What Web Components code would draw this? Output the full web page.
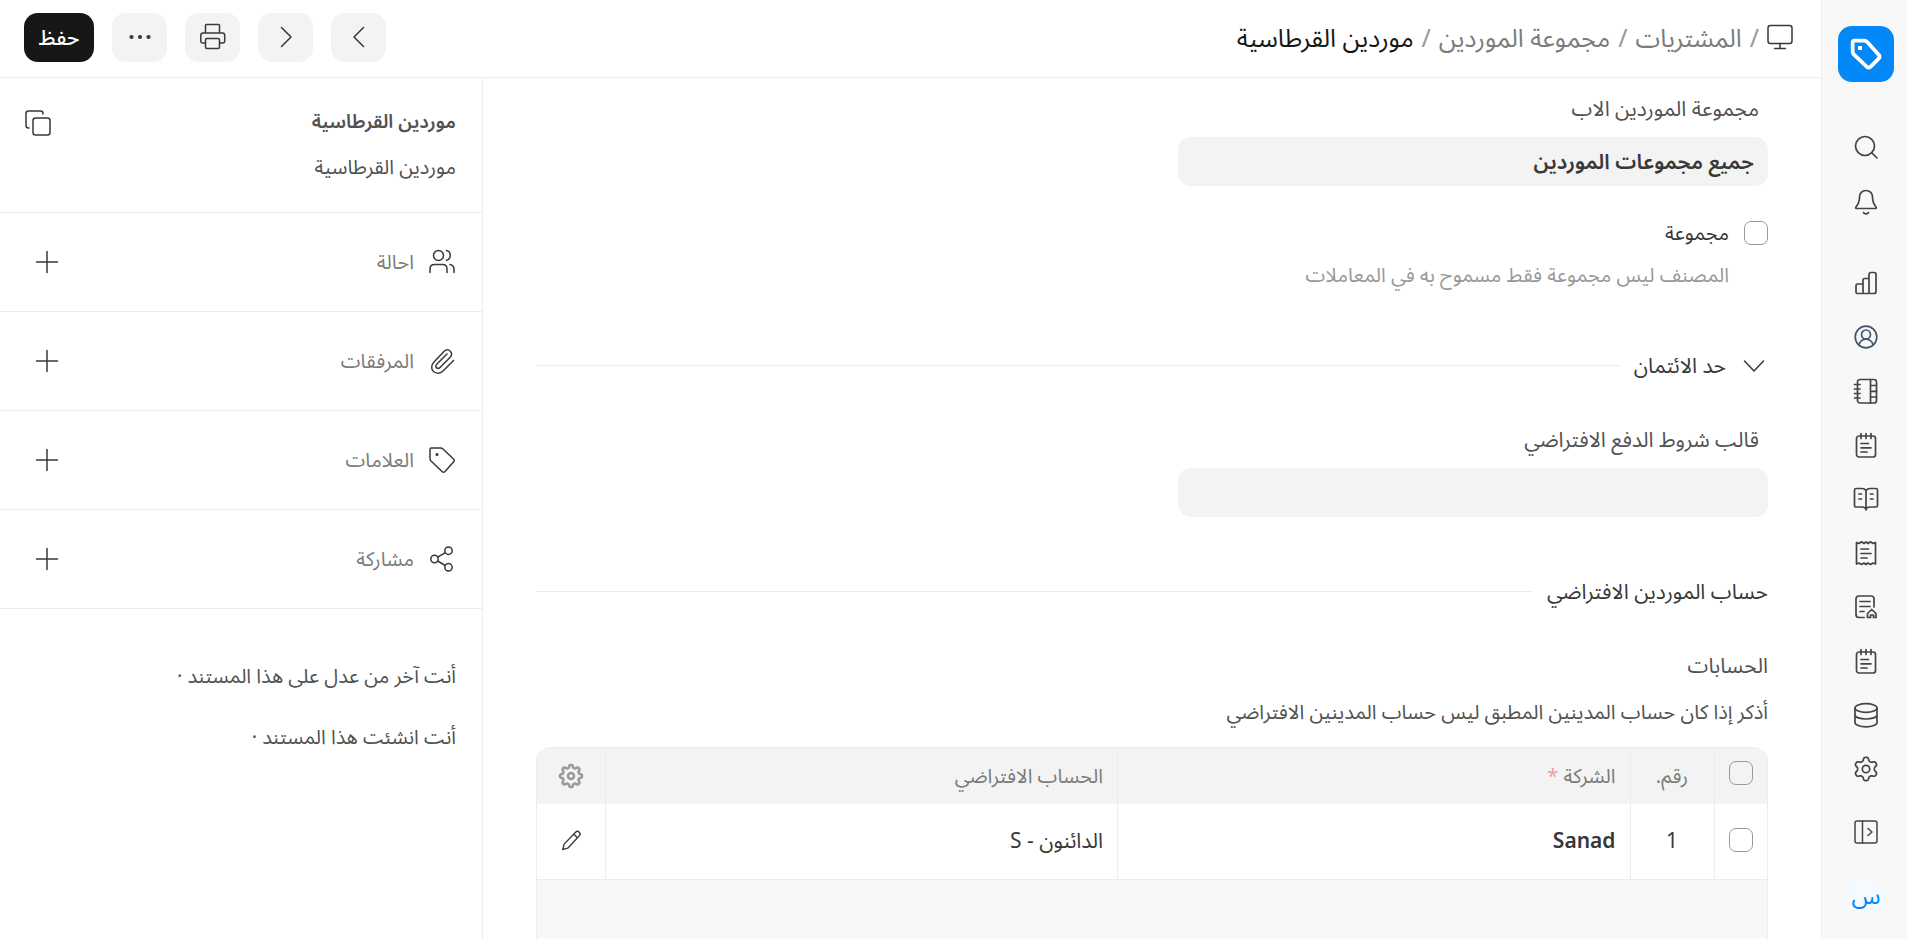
<!DOCTYPE html>
<html lang="ar" dir="rtl">
<head>
<meta charset="utf-8">
<title>موردين القرطاسية</title>
<style>
  body {
    margin: 0;
    font-family: "Noto Sans", "Noto Sans Arabic", "DejaVu Sans", sans-serif;
    font-size: 20px;
    line-height: 28px;
    color: #383838;
    background: #fff;
  }
</style>
</head>
<body>
<app-shell>
  <app-rail slot="rail"></app-rail>
  <page-header slot="header">
    <a slot="crumb" href="#buying">المشتريات</a>
    <a slot="crumb" href="#groups">مجموعة الموردين</a>
    <a slot="crumb" href="#doc" aria-current="page">موردين القرطاسية</a>
  </page-header>
  <form-section slot="form">
    <text-field label="مجموعة الموردين الاب" value="جميع مجموعات الموردين"></text-field>
    <check-field label="مجموعة">المصنف ليس مجموعة فقط مسموح به في المعاملات</check-field>
  </form-section>
  <form-section slot="form" heading="حد الائتمان" collapsible>
    <text-field label="قالب شروط الدفع الافتراضي"></text-field>
  </form-section>
  <form-section slot="form" heading="حساب الموردين الافتراضي">
    <accounts-table></accounts-table>
  </form-section>
  <side-panel slot="side">
    <panel-row icon="users">احالة</panel-row>
    <panel-row icon="clip">المرفقات</panel-row>
    <panel-row icon="tag">العلامات</panel-row>
    <panel-row icon="share">مشاركة</panel-row>
    <p slot="log">أنت آخر من عدل على هذا المستند ·</p>
    <p slot="log">أنت انشئت هذا المستند ·</p>
  </side-panel>
</app-shell>

<script>
// closed outline of a cog wheel around 12,12
function cogPath(teeth, radius, depth) {
  const points = [];
  for (let a = 0; a < 360; a += 3) {
    const t = (a * Math.PI) / 180;
    const r = radius + depth * Math.tanh(1.8 * Math.cos(teeth * t));
    points.push(`${(12 + r * Math.sin(t)).toFixed(2)} ${(12 - r * Math.cos(t)).toFixed(2)}`);
  }
  return `<path d="M${points.join("L")}z"/>`;
}

const ICONS = {
  search: '<circle cx="11" cy="11" r="9.5"/><path d="M18 18l5 5"/>',
  bell: '<path d="M12 1.5c-4 0-6.5 3-6.5 6.500 0 5-1.500 7.500-3.500 10-.8 1 0 1.500.8 1.500h18.400c.8 0 1.600-.5.8-1.500-2-2.500-3.500-5-3.500-10 0-3.500-2.500-6.500-6.500-6.500zM9.500 23.500c.6 1.700 4.400 1.700 5 0"/>',
  chart: '<path d="M2 14.500q0-1.500 1.500-1.500h5.500v9.500h-5.500q-1.500 0-1.500-1.500zM9 22.500V9q0-1.500 1.500-1.500h4.500v15zM15 22.500V3.500q0-2 2-2h3q2 0 2 2V20.500q0 2-2 2H9"/>',
  user: '<circle cx="12" cy="12" r="10.800"/><circle cx="12" cy="9.500" r="4.500"/><path d="M5 20c.5-3.500 3.500-5.500 7-6 3.500.5 6.500 2.500 7 6"/>',
  notebook: '<rect x="3.500" y="0.500" width="19" height="23.500" rx="2.500"/><path d="M16.500.5V24M16.500 6.500h6M16.500 12.300h6M16.500 18h6M.5 5.500h5.500M.5 10h5.500M.5 14.500h5.500M.5 19h5.500"/>',
  note: '<rect x="2.500" y="3" width="19" height="21" rx="2.500"/><path d="M7 .5v5M12 .5v5M17 .5v5M7 10.500h7.500M7 14.800h10M7 19h6"/>',
  book: '<path d="M12 3.500C11 2 9.500 1.500 8 1.500H2Q.5 1.500.5 3v15.500Q.5 20 2 20h6c2 0 3.500.5 4 2.500.5-2 2-2.500 4-2.500h6q1.500 0 1.500-1.500V3q0-1.500-1.500-1.500h-6c-1.500 0-3 .5-4 2zM12 3.500V23M5 7h2.500M5 12h2.500M16.500 7H19M16.500 12H19"/>',
  receipt: '<path d="M2.500 1.500 5 2.500 7.500.8 10 2.500 12 .8 14 2.500 16.500.8 19 2.500 21.500 1.500V23L19 22 16.500 23.500 14 22 12 23.500 10 22 7.500 23.500 5 22 2.500 23zM7 8h7.500M7 12.500h10M7 17h6"/>',
  document: '<path d="M20 12V4q0-3-3-3H5Q2 1 2 4V19.500q0 3 3 3h5M6 6.500h10M6 11.500h10M6 16.500h4"/><path d="M13.500 18.500 17.700 14.500 22 18.500V22.500H19.500V20H16.500V22.500H13.500z"/>',
  database: '<ellipse cx="12" cy="5" rx="11" ry="4.300"/><path d="M1 5v14.500c0 2.400 5 4.300 11 4.300s11-1.900 11-4.300V5M1 12c0 2.400 5 4 11 4s11-1.600 11-4"/>',
  cog: '<circle cx="12" cy="12" r="3.700"/>' + cogPath(6, 10, 1.7),
  panel: '<rect x="1" y="1" width="22" height="22" rx="2"/><path d="M8.500 1v22M14 8.500l4 3.500-4 3.500"/>',
  logo: '<path d="M2 3.500Q2 2 3.500 2H10.500Q12 2 13 3L21.500 12.500Q23 14 21.500 15.500L15.500 21.500Q14 23 12.500 21.500L3 12.500Q2 11.500 2 10z"/><path d="M6 6h3v3H6z" fill="currentColor" stroke="none"/>',
  screen: '<rect x="1" y="1.500" width="24" height="18" rx="2.500"/><path d="M13 19.500v5M7.500 24.500h11"/>',
  left: '<path d="M16.500 2.500 7 12l9.500 9.500"/>',
  right: '<path d="M7.500 2.500 17 12l-9.500 9.500"/>',
  down: '<path d="M2.500 8 12 18l9.500-10"/>',
  print: '<path d="M5.500 9V1.500Q5.500.5 6.500.5h12q1 0 1 1V9M5.500 19H3Q.8 19 .8 17v-5.500Q.8 9 3 9H22.500q2.200 0 2.200 2.500V17q0 2-2.200 2H19.500"/><rect x="5.500" y="14.500" width="14" height="10" rx="1.500"/>',
  dots: '<g fill="currentColor" stroke="none"><circle cx="4.500" cy="13" r="2.100"/><circle cx="13" cy="13" r="2.100"/><circle cx="21.500" cy="13" r="2.100"/></g>',
  copy: '<rect x="8" y="8" width="17" height="17" rx="2.500"/><path d="M4 18H3.500Q1 18 1 15.500V3.500Q1 1 3.500 1H15.500Q18 1 18 3.500V4"/>',
  users: '<circle cx="9.500" cy="6.500" r="5"/><path d="M1 23.500v-3.500Q1 15.500 5.500 15.500H13.500Q18 15.500 18 20v3.500M17.500 1.500c5 1 5 8.500 0 9.800M21 15.500q4 1 4 4.500v3.500"/>',
  clip: '<path d="M24.500 12.500 14 23c-3 3-7 2.500-9.500.5s-2.500-6.500.5-9.500L15 3.500c2-2 4.500-2 6.300-.3s1.700 4.200-.3 6.300L11 19.500c-1.200 1.200-2.800 1-3.600.2s-.9-2.300.3-3.500L18 6"/>',
  tag: '<path d="M1 2.500Q1 1 2.500 1H11.500Q13 1 14 2L24.500 12Q26 13.500 24.500 15L16 24.500Q14.500 26 13 24.500L2 14Q1 13 1 11.500z"/><circle cx="8" cy="7.500" r=".8" fill="currentColor"/>',
  share: '<circle cx="5.500" cy="13" r="3.700"/><circle cx="19.500" cy="4.700" r="3.700"/><circle cx="19.500" cy="21.300" r="3.700"/><path d="M8.700 11.200 16.300 6.600M8.700 15l7.600 4.500"/>',
  plus: '<path d="M12 1.500v21M1.500 12h21"/>',
  gear: '<circle cx="12" cy="12" r="3"/>' + cogPath(8, 9.7, 1.4),
  pencil: '<path d="M3 22.500 4.500 16.500 17 3.500Q19 1.500 21 3.500T21 7.500L9 20.500zM15 5.500l4 4"/>'
};

// box size of the icons that are not drawn on a 24px grid
const GRID = { screen: 26, print: 26, dots: 26, copy: 26, users: 26, clip: 26, tag: 26, share: 26 };

class BaseElement extends HTMLElement {
  constructor() {
    super();
    this.shadow = this.attachShadow({ mode: "open" });
  }

  connectedCallback() {
    this.shadow.innerHTML = `
      <style>
        * { box-sizing: border-box; }
        a { color: inherit; text-decoration: none; }
        button, input { font: inherit; color: inherit; margin: 0; }
        button { border: 0; padding: 0; background: none; display: flex; align-items: center; justify-content: center; cursor: pointer; }
        input[type="checkbox"] { appearance: none; width: 24px; height: 24px; border: 1px solid #999; border-radius: 7px; background: transparent; flex: none; }
        ${this.css()}
      </style>
      ${this.html()}`;
  }
}

customElements.define("svg-icon", class extends BaseElement {
  css() {
    return `:host { display: block; flex: none; } svg { display: block; fill: none; stroke: currentColor; stroke-linecap: round; stroke-linejoin: round; }`;
  }

  html() {
    const name = this.getAttribute("name");
    const grid = GRID[name] || 24;
    const size = this.getAttribute("size") || grid;
    const weight = this.getAttribute("weight") || 1.5;
    return `<svg width="${size}" height="${size}" viewBox="0 0 ${grid} ${grid}" stroke-width="${weight}" overflow="visible" aria-hidden="true">${ICONS[name]}</svg>`;
  }
});

customElements.define("app-shell", class extends BaseElement {
  css() {
    return `
      :host { display: grid; grid-template-columns: 86px minmax(0, 1fr); height: 100vh; overflow: hidden; }
      .page { display: flex; flex-direction: column; min-height: 0; }
      .body { flex: 1; min-height: 0; display: grid; grid-template-columns: minmax(0, 1fr) 483px; }
      main { padding: 18px 53px 0; overflow: hidden; }
    `;
  }

  html() {
    return `
      <slot name="rail"></slot>
      <div class="page">
        <slot name="header"></slot>
        <div class="body">
          <main><slot name="form"></slot></main>
          <slot name="side"></slot>
        </div>
      </div>`;
  }
});

customElements.define("app-rail", class extends BaseElement {
  css() {
    return `
      :host { display: flex; flex-direction: column; align-items: center; box-sizing: border-box; padding: 26px 0 0 3px; background: #f8f8f8; border-left: 1px solid #ededed; color: #444; overflow: hidden; }
      .logo { width: 56px; height: 56px; border-radius: 14px; background: #0289f7; color: #fff; display: grid; place-items: center; margin-bottom: 38px; flex: none; }
      nav { display: flex; flex-direction: column; margin-bottom: 28px; }
      nav + nav { margin-bottom: 9px; }
      nav a, button { width: 54px; height: 54px; display: grid; place-items: center; flex: none; }
      .user { color: #44566c; }
      .avatar { width: 38px; height: 38px; margin-top: 17px; border-radius: 50%; background: #f5faff; color: #0289f7; font-size: 24px; display: grid; place-items: center; flex: none; }
    `;
  }

  html() {
    const link = (name) => `<a href="#${name}" class="${name}"><svg-icon name="${name}" weight="1.700"></svg-icon></a>`;
    const modules = ["chart", "user", "notebook", "note", "book", "receipt", "document", "note", "database", "cog"];
    return `
      <a class="logo" href="#home"><svg-icon name="logo" size="32" weight="2.800"></svg-icon></a>
      <nav>${["search", "bell"].map(link).join("")}</nav>
      <nav>${modules.map(link).join("")}</nav>
      <button type="button" aria-label="توسيع"><svg-icon name="panel"></svg-icon></button>
      <a class="avatar" href="#me">س</a>`;
  }
});

customElements.define("page-header", class extends BaseElement {
  css() {
    return `
      :host { display: flex; align-items: center; justify-content: space-between; box-sizing: border-box; height: 78px; padding: 0 28px 3px 24px; border-bottom: 1px solid #ededed; flex: none; }
      nav { display: flex; align-items: center; font-size: 25px; color: #7c7c7c; }
      .home { color: #383838; }
      ::slotted(a) { color: inherit; text-decoration: none; }
      ::slotted(a)::before { content: "/"; margin: 0 8px; color: #999; }
      ::slotted(a[aria-current]) { color: #171717; }
      .actions { display: flex; gap: 18px; }
      button { width: 55px; height: 49px; border-radius: 14px; background: #f3f3f3; }
      button.save { width: 70px; background: #171717; color: #fff; font-size: 21px; font-weight: 500; }
    `;
  }

  html() {
    const action = (name, label, size) => `<button type="button" aria-label="${label}"><svg-icon name="${name}" size="${size}"></svg-icon></button>`;
    return `
      <nav><a class="home" href="#desk"><svg-icon name="screen"></svg-icon></a><slot name="crumb"></slot></nav>
      <div class="actions">
        ${action("left", "السابق", 24)}
        ${action("right", "التالي", 24)}
        ${action("print", "طباعة", 26)}
        ${action("dots", "المزيد", 26)}
        <button type="button" class="save">حفظ</button>
      </div>`;
  }
});

customElements.define("form-section", class extends BaseElement {
  css() {
    return `
      :host { display: block; }
      :host(:not(:first-of-type)) { margin-top: 60px; }
      h2 { display: flex; align-items: center; gap: 14px; margin: 0 0 48px; font-size: 21px; font-weight: 400; line-height: 28px; }
      h2::after { content: ""; flex: 1; height: 1px; background: #ededed; }
      h2 button { width: 28px; height: 28px; }
      .fields { display: flex; flex-direction: column; gap: 33px; }
    `;
  }

  html() {
    const heading = this.getAttribute("heading");
    const toggle = this.hasAttribute("collapsible")
      ? `<button type="button" aria-label="طي"><svg-icon name="down" size="24"></svg-icon></button>` : "";
    return `${heading ? `<h2>${toggle}${heading}</h2>` : ""}<div class="fields"><slot></slot></div>`;
  }
});

customElements.define("text-field", class extends BaseElement {
  css() {
    return `
      :host { display: block; width: calc(50% - 26px); font-size: 21px; }
      label { display: block; margin-bottom: 17px; padding-right: 9px; line-height: 24px; color: #525252; }
      input { display: block; width: 100%; height: 49px; padding: 0 14px; border: 0; border-radius: 13px; background: #f3f3f3; font-weight: 600; }
    `;
  }

  html() {
    return `
      <label for="field">${this.getAttribute("label")}</label>
      <input id="field" type="text" value="${this.getAttribute("value") || ""}">`;
  }
});

customElements.define("check-field", class extends BaseElement {
  css() {
    return `
      :host { display: block; padding-bottom: 2px; }
      label { display: flex; align-items: center; gap: 15px; }
      p { margin: 14px 39px 0 0; line-height: 28px; color: #999; }
    `;
  }

  html() {
    return `
      <label><input type="checkbox">${this.getAttribute("label")}</label>
      <p><slot></slot></p>`;
  }
});

customElements.define("accounts-table", class extends BaseElement {
  css() {
    return `
      :host { display: block; }
      h3, p { margin: 0 0 23px; font-size: 20px; font-weight: 400; line-height: 24px; color: #525252; }
      h3 { font-size: 21px; }
      .grid { border: 1px solid #ededed; border-radius: 14px; background: #f8f8f8; overflow: hidden; min-height: 300px; }
      table { width: 100%; border-collapse: collapse; table-layout: fixed; }
      th, td { padding: 0 14px; font-weight: 400; text-align: right; border-left: 1px solid #ededed; }
      th:last-child, td:last-child { border-left: 0; }
      th { height: 56px; background: #f3f3f3; color: #7c7c7c; }
      td { height: 75px; padding-bottom: 3px; background: #fff; border-bottom: 1px solid #ededed; font-size: 21px; }
      .pick { width: 53px; }
      .no { width: 84px; text-align: center; }
      .edit { width: 68px; }
      .no, .pick, .edit { padding-right: 0; padding-left: 0; }
      th.pick { padding-bottom: 6px; }
      input { display: block; margin: 0 auto; }
      button { margin: 0 auto; }
      th button { color: #999; }
      b { font-weight: 600; }
      i { font-style: normal; color: #f09a9a; }
    `;
  }

  html() {
    return `
      <h3>الحسابات</h3>
      <p>أذكر إذا كان حساب المدينين المطبق ليس حساب المدينين الافتراضي</p>
      <div class="grid">
        <table>
          <tr>
            <th class="pick"><input type="checkbox" aria-label="تحديد الكل"></th>
            <th class="no">رقم.</th>
            <th>الشركة <i>*</i></th>
            <th>الحساب الافتراضي</th>
            <th class="edit"><button type="button" aria-label="إعدادات"><svg-icon name="gear" weight="2.500" size="24"></svg-icon></button></th>
          </tr>
          <tr>
            <td class="pick"><input type="checkbox" aria-label="تحديد"></td>
            <td class="no">1</td>
            <td><b>Sanad</b></td>
            <td>الدائنون - S</td>
            <td class="edit"><button type="button" aria-label="تعديل"><svg-icon name="pencil" size="22"></svg-icon></button></td>
          </tr>
        </table>
      </div>`;
  }
});

customElements.define("side-panel", class extends BaseElement {
  css() {
    return `
      :host { display: block; border-right: 1px solid #ededed; overflow: hidden; color: #525252; }
      header { display: flex; justify-content: space-between; align-items: flex-start; height: 135px; padding: 29px 26px 0 25px; border-bottom: 1px solid #ededed; box-sizing: border-box; }
      h1, header p { margin: 0; font-size: 20px; line-height: 28px; font-weight: 400; }
      h1 { font-size: 19px; font-weight: 600; }
      header p { margin-top: 18px; }
      header button { margin-top: 3px; color: #383838; }
      .log { padding: 53px 26px 0; }
      ::slotted(p) { margin: 0 0 33px; }
    `;
  }

  html() {
    return `
      <header>
        <div><h1>موردين القرطاسية</h1><p>موردين القرطاسية</p></div>
        <button type="button" aria-label="نسخ"><svg-icon name="copy"></svg-icon></button>
      </header>
      <slot></slot>
      <div class="log"><slot name="log"></slot></div>`;
  }
});

customElements.define("panel-row", class extends BaseElement {
  css() {
    return `
      :host { display: flex; align-items: center; gap: 15px; box-sizing: border-box; height: 99px; padding: 0 27px 0 35px; border-bottom: 1px solid #ededed; color: #7c7c7c; }
      svg-icon { color: #383838; }
      button { margin-right: auto; }
    `;
  }

  html() {
    return `
      <svg-icon name="${this.getAttribute("icon")}"></svg-icon>
      <slot></slot>
      <button type="button" aria-label="إضافة"><svg-icon name="plus"></svg-icon></button>`;
  }
});
</script>
</body>
</html>
